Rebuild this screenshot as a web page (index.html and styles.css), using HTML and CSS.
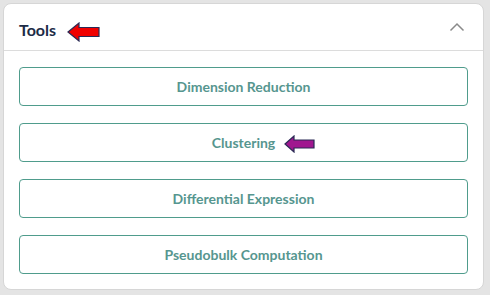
FILE: index.html
```html
<!DOCTYPE html>
<html>
<head>
<meta charset="utf-8">
<link rel="stylesheet" href="styles.css">
</head>
<body>
<div class="card">
  <div class="card-header">
    <span class="title">Tools</span>
    <svg class="arrow arrow-red" width="34" height="20" viewBox="0 0 34 20">
      <polygon points="1,10 12,1 12,5.5 32,5.5 32,14.5 12,14.5 12,19" fill="#f00000" stroke="#2a2a55" stroke-width="1.2" stroke-linejoin="miter"/>
    </svg>
    <svg class="chevron" width="16" height="10" viewBox="0 0 16 10">
      <polyline points="1.5,8.5 8,2 14.5,8.5" fill="none" stroke="#8a8a8a" stroke-width="1.5"/>
    </svg>
  </div>
  <div class="card-body">
    <button class="tool-btn">Dimension Reduction</button>
    <button class="tool-btn has-arrow">Clustering
      <svg class="arrow arrow-purple" width="32" height="18" viewBox="0 0 32 18">
        <polygon points="1,9 10,1 10,5 30,5 30,13 10,13 10,17" fill="#a0178f" stroke="#2a2a55" stroke-width="1.2"/>
      </svg>
    </button>
    <button class="tool-btn">Differential Expression</button>
    <button class="tool-btn">Pseudobulk Computation</button>
  </div>
</div>
</body>
</html>
```
FILE: styles.css
```css
html, body {
  margin: 0;
  padding: 0;
}
body {
  background: #e4e4e4;
  width: 490px;
  height: 295px;
  padding: 3px;
  box-sizing: border-box;
  font-family: "Lato", "Liberation Sans", sans-serif;
}
.card {
  width: 481px;
  height: 287px;
  background: #fff;
  border: 1px solid #d6d6d6;
  border-radius: 8px;
  box-sizing: border-box;
}
.card-header {
  position: relative;
  height: 47px;
  border-bottom: 1px solid #dcdcdc;
  display: flex;
  align-items: center;
  padding: 0 15px;
  box-sizing: border-box;
}
.title {
  font-size: 16px;
  font-weight: 700;
  color: #1c2b46;
  margin-top: 4px;
}
.chevron {
  margin-left: auto;
  margin-right: 3px;
}
.arrow {
  position: absolute;
}
.arrow-red {
  left: 63px;
  top: 18px;
}
.card-body {
  display: flex;
  flex-direction: column;
  gap: 17px;
  padding: 16px 15px 0 15px;
}
.tool-btn {
  position: relative;
  height: 39px;
  background: #fff;
  border: 1.5px solid #4f9c8c;
  border-radius: 4px;
  font-family: "Lato", "Liberation Sans", sans-serif;
  font-size: 14px;
  font-weight: 700;
  color: #56968f;
  padding: 0;
}
.arrow-purple {
  left: 264px;
  top: 11px;
}
```
